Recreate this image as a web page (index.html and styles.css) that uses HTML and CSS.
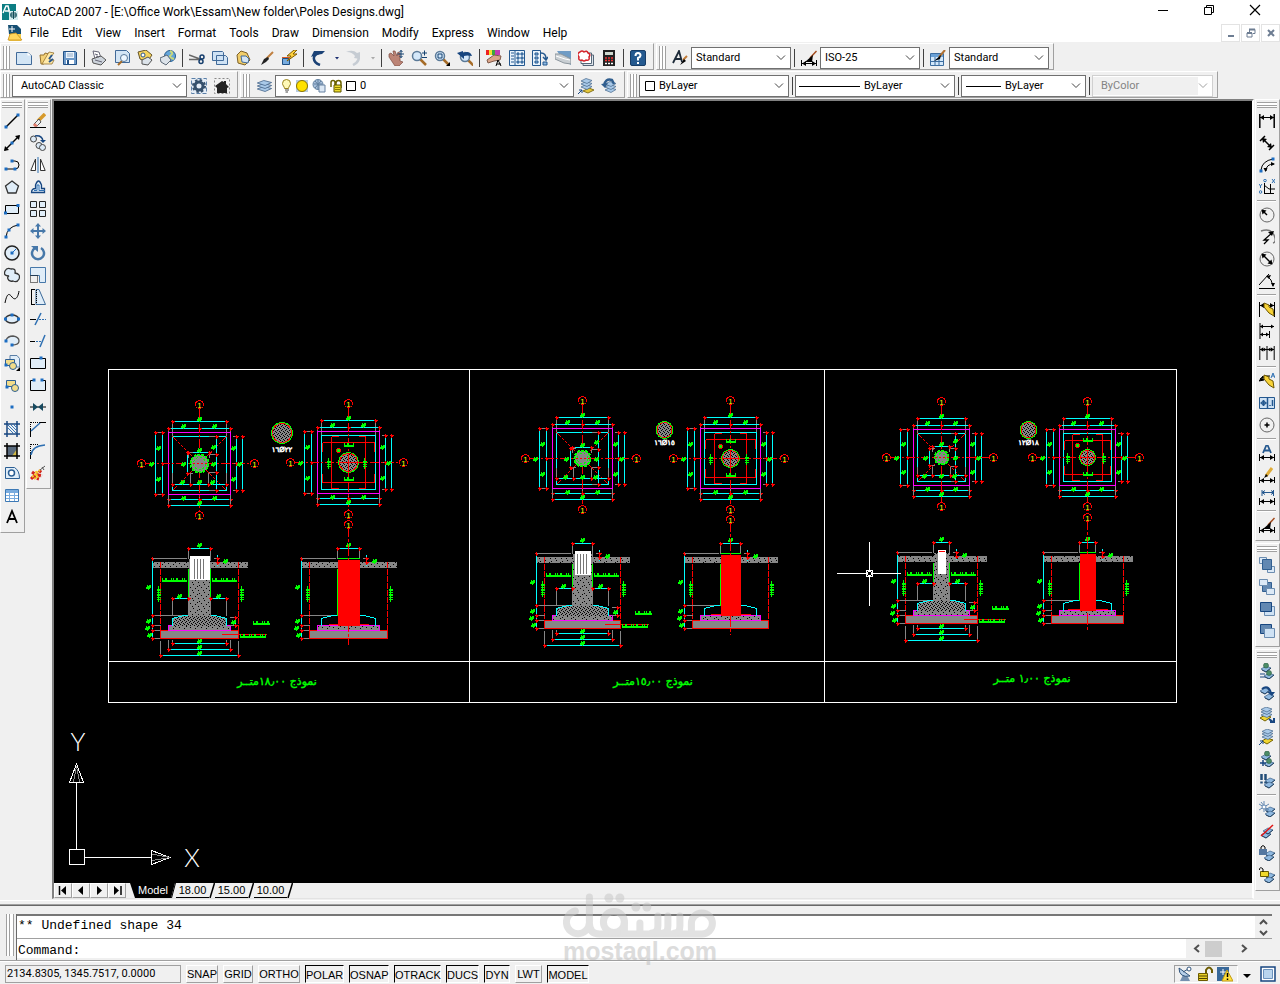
FILE: index.html
```html
<!DOCTYPE html>
<html lang="en">
<head>
<meta charset="utf-8">
<title>AutoCAD 2007 - [E:\Office Work\Essam\New folder\Poles Designs.dwg]</title>
<link rel="stylesheet" href="styles.css">
</head>
<body>
<header class="titlebar">
  <span class="app-icon" data-icon="app"></span>
  <h1 class="title">AutoCAD 2007 - [E:\Office Work\Essam\New folder\Poles Designs.dwg]</h1>
  <div class="win-controls">
    <button aria-label="Minimize"><svg width="12" height="12"><path d="M1 6.500h10" stroke="#000"/></svg></button>
    <button aria-label="Restore"><svg width="12" height="12"><path d="M1.500 3.500h7v7h-7zM3.500 3.500v-2h7v7h-2" fill="none" stroke="#000"/></svg></button>
    <button aria-label="Close"><svg width="12" height="12"><path d="M1 1l10 10M11 1L1 11" stroke="#000" stroke-width="1.200"/></svg></button>
  </div>
</header>
<nav class="menubar">
  <span class="doc-icon" data-icon="doc"></span>
  <button>File</button><button>Edit</button><button>View</button><button>Insert</button><button>Format</button><button>Tools</button><button>Draw</button><button>Dimension</button><button>Modify</button><button>Express</button><button>Window</button><button>Help</button>
  <div class="doc-controls">
    <button aria-label="Minimize drawing"><svg width="10" height="10"><path d="M2 8h6" stroke="#6d7d92" stroke-width="2"/></svg></button>
    <button aria-label="Restore drawing"><svg width="10" height="10"><path d="M1 5h5v4H1zM3.500 4V1.500H9v4H7" fill="none" stroke="#6d7d92"/><path d="M3 1.500h6M1 5h5" stroke="#6d7d92" stroke-width="2"/></svg></button>
    <button aria-label="Close drawing"><svg width="10" height="10"><path d="M2 2l6 6M8 2L2 8" stroke="#6d7d92" stroke-width="2"/></svg></button>
  </div>
</nav>
<div class="toolrow">
  <div class="toolbar" data-tools="new open save | plot preview publish globe | cut copy paste brush match | undo ^drop redo ^dropoff | pan zoomrt zoomwin zoomprev | props center palettes sheets markup calc | help"></div>
  <div class="toolbar">
    <span class="grip"></span>
    <button class="tool" aria-label="Text style" data-icon="textstyle"></button>
    <label class="combo w100"><select aria-label="Text style"><option>Standard</option></select></label>
    <span class="sep"></span>
    <button class="tool" aria-label="Dimension style" data-icon="dimstyle"></button>
    <label class="combo w100"><select aria-label="Dimension style"><option>ISO-25</option></select></label>
    <span class="sep"></span>
    <button class="tool" aria-label="Table style" data-icon="tablestyle"></button>
    <label class="combo w100"><select aria-label="Table style"><option>Standard</option></select></label>
  </div>
</div>
<div class="toolrow">
  <div class="toolbar">
    <span class="grip"></span>
    <label class="combo wide-text w175"><select aria-label="Workspace"><option>AutoCAD Classic</option></select></label>
    <button class="tool" aria-label="Workspace settings" data-icon="gear"></button>
    <button class="tool" aria-label="My workspace" data-icon="home"></button>
  </div>
  <div class="toolbar">
    <span class="grip"></span>
    <button class="tool" aria-label="Layer manager" data-icon="layers"></button>
    <label class="combo w300">
      <svg class="deco" width="80" height="18" aria-hidden="true"><path d="M10.500 2.500a4 4 0 0 1 4 4c0 2-2 3-2 5h-4c0-2-2-3-2-5a4 4 0 0 1 4-4z" fill="#fff9b8" stroke="#9a8420"/><path d="M9 13h4M9.500 15h2.500" stroke="#444"/><rect x="20" y="3" width="12" height="12" fill="#b8cce0"/><circle cx="26" cy="9" r="5.500" fill="#ffe100" stroke="#8b7400"/><circle cx="42" cy="7.500" r="5" fill="#a9c0dc" stroke="#61809f"/><path d="M38 7h8M42 3v9M39 4l6 7M45 4l-6 7" stroke="#61809f"/><path d="M43 8h6v7h-6z" fill="#dce8f5" stroke="#6681a0"/><path d="M55 10V5.500a2 2 0 0 1 4 0V9M60 9V6a2.500 2.500 0 0 1 5 0v5" fill="none" stroke="#6b6300" stroke-width="1.500"/><path d="M58 8h7v7h-7z" fill="#eddc2c" stroke="#5c5500"/><path d="M59 10.500h5M59 12.500h5" stroke="#8b8000"/><path d="M70.500 4.500h9v9h-9z" fill="#fff" stroke="#000"/></svg>
      <select aria-label="Layer"><option>0</option></select></label>
    <button class="tool" aria-label="Make object's layer current" data-icon="laycur"></button>
    <button class="tool" aria-label="Layer previous" data-icon="layprev"></button>
  </div>
  <div class="toolbar">
    <span class="grip"></span>
    <label class="combo w150"><svg class="deco" width="15" height="18" aria-hidden="true"><path d="M5.500 4.500h9v9h-9z" fill="#fff" stroke="#000"/></svg><select aria-label="Color"><option>ByLayer</option></select></label>
    <span class="sep"></span>
    <label class="combo w160"><svg class="deco" width="64" height="18" aria-hidden="true"><path d="M3 9.500h61" stroke="#000"/></svg><select aria-label="Linetype"><option>ByLayer</option></select></label>
    <span class="sep"></span>
    <label class="combo w125"><svg class="deco" width="39" height="18" aria-hidden="true"><path d="M4 9.500h35" stroke="#000"/></svg><select aria-label="Lineweight"><option>ByLayer</option></select></label>
    <span class="sep"></span>
    <label class="combo wide-text off w120"><select aria-label="Plot style" disabled><option>ByColor</option></select></label>
  </div>
</div>
<main class="workspace">
  <div class="toolbar vertical" data-tools="line xline pline polygon rect arc circle cloud spline ellipse earc insert block point hatch gradient region table mtext"></div>
  <div class="toolbar vertical" data-tools="erase copyobj mirror offset array move rotate scale stretch trim extend breakpt break join chamfer fillet explode"></div>
  <section class="viewport">
    <svg id="drawing" class="drawing" viewBox="54 101 1198 782" role="img" aria-label="Pole foundation drawings"></svg>
    <div class="tabs">
      <button class="nav" aria-label="First tab"><svg width="12" height="11"><path d="M2.500 1v9" stroke="#000" stroke-width="1.500"/><path d="M9 1v9L4 5.500z"/></svg></button>
      <button class="nav" aria-label="Previous tab"><svg width="12" height="11"><path d="M8 1v9L3 5.500z"/></svg></button>
      <button class="nav" aria-label="Next tab"><svg width="12" height="11"><path d="M4 1v9l5-4.500z"/></svg></button>
      <button class="nav" aria-label="Last tab"><svg width="12" height="11"><path d="M10 1v9" stroke="#000" stroke-width="1.500"/><path d="M3 1v9l5-4.500z"/></svg></button>
      <svg class="slant first" width="6" height="15"><path d="M0 0h6v15H5z"/></svg>
      <button class="tab current">Model</button>
      <svg class="slant" width="6" height="15"><path d="M0 0h5L1 15H0z"/><path d="M5.500 0L1.500 15" stroke="#000"/></svg>
      <button class="tab">18.00</button>
      <svg class="slant" width="6" height="15"><path d="M5.500 0L1 15" stroke="#000" stroke-width="1.500"/></svg>
      <button class="tab">15.00</button>
      <svg class="slant" width="6" height="15"><path d="M5.500 0L1 15" stroke="#000" stroke-width="1.500"/></svg>
      <button class="tab">10.00</button>
      <svg class="slant" width="6" height="15"><path d="M5.500 0L1 15" stroke="#000" stroke-width="1.500"/></svg>
    </div>
  </section>
  <div class="dock">
    <div class="toolbar vertical" data-tools="dlinear daligned darc dord | drad djog ddia dang | qdim dbase dcont | qleader tol cmark | dedit dtedit dupdate | dimstyle"></div>
    <div class="toolbar vertical" data-tools="front back above under"></div>
    <div class="toolbar vertical" data-tools="lmatch lprev2 lcur2 lcopy liso luniso | lfreeze loff llock lunlock"></div>
  </div>
</main>
<section class="command">
  <span class="grip"></span>
  <div class="console">
    <div class="history"><output>** Undefined shape 34</output>
      <div class="vscroll"><button aria-label="Scroll up"><svg width="9" height="6"><path d="M1 5l3.500-3.500L8 5" class="chev"/></svg></button><button aria-label="Scroll down"><svg width="9" height="6"><path d="M1 1l3.500 3.500L8 1" class="chev"/></svg></button></div>
    </div>
    <div class="prompt"><label for="cmd">Command:</label><input id="cmd" type="text">
      <div class="hscroll"><button aria-label="Scroll left"><svg width="7" height="9"><path d="M6 1L2 4.500 6 8" class="chev"/></svg></button><span class="thumb"></span><button aria-label="Scroll right"><svg width="7" height="9"><path d="M1 1l4 3.500L1 8" class="chev"/></svg></button></div>
    </div>
  </div>
  <div class="watermark">
    <svg width="154" height="45" viewBox="563 893 154 45" role="img" aria-label="mostaql">
      <g fill="none" stroke="#c6c6c6" stroke-width="7" stroke-linecap="round" stroke-linejoin="round">
        <path d="M589.500 897v26a11.500 11.500 0 1 1-14-12M589.500 923q0 11 10 11H702a10.500 10.500 0 1 0-10.500-10.500V934"/>
        <circle cx="614" cy="922" r="10.500"/><path d="M624.500 922v11M640 923v10M658 916v10q0 7-6 7M668 916v10q0 7-5 7M680 916v10q0 7-5 7"/>
      </g>
      <g fill="#c6c6c6"><circle cx="609" cy="898" r="4.500"/><circle cx="620" cy="898" r="4.500"/><circle cx="636" cy="907" r="4.500"/><circle cx="647" cy="907" r="4.500"/></g>
    </svg>
    <span>mostaql.com</span>
  </div>
</section>
<footer class="status">
  <output class="coords">2134.8305, 1345.7517, 0.0000</output>
  <button class="w32">SNAP</button><button class="w30">GRID</button><button class="w42">ORTHO</button><button class="w39 on">POLAR</button><button class="w40 on">OSNAP</button><button class="w47 on">OTRACK</button><button class="w33 on">DUCS</button><button class="w26 on">DYN</button><button class="w27">LWT</button><button class="w42 on">MODEL</button>
  <div class="tray"><span data-icon="dish"></span><span data-icon="lock"></span><span data-icon="warn"></span></div>
  <button class="bare" aria-label="Status bar menu"><svg width="8" height="4"><path d="M0 0h8L4 4z"/></svg></button>
  <button class="bare" aria-label="Clean screen" data-icon="clean"></button>
</footer>
<script src="app.js"></script>
</body>
</html>
```
FILE: styles.css
```css
* { box-sizing: border-box; }
html, body { height: 100%; }
body { margin: 0; display: flex; flex-direction: column; background: #f0f0f0; color: #000; font: 12px/16px Roboto, "Open Sans", sans-serif; overflow: hidden; }
button, select, input { font: inherit; color: inherit; margin: 0; padding: 0; border: 0; background: none; border-radius: 0; }
svg { display: block; flex: none; }
.chev { fill: none; stroke: #505050; stroke-width: 2; }

.titlebar { display: flex; align-items: center; flex: none; height: 24px; padding-left: 2px; background: #fff; }
.title { flex: 1; margin: 0 0 0 5px; font-size: 12px; font-weight: 400; }
.win-controls { display: flex; height: 20px; align-self: flex-start; margin-right: 2px; }
.win-controls button { width: 46px; display: grid; place-items: center; }
.menubar { display: flex; align-items: center; flex: none; height: 18px; padding-left: 7px; background: #fff; }
.doc-icon { width: 16px; }
.menubar > button { height: 18px; padding: 0 6px 0 7px; }
.doc-controls { display: flex; gap: 1px; margin-left: auto; }
.doc-controls button { width: 19px; height: 18px; display: grid; place-items: center; border: 1px solid #e3e3e3; background: #fff; }

.toolrow { display: flex; flex: none; gap: 2px; height: 27px; margin-top: 1px; }
.toolbar { display: flex; align-items: center; flex: none; height: 27px; padding: 2px 4px 0 2px; border: 1px solid #fff; border-right-color: #a0a0a0; border-bottom-color: #a0a0a0; }
.grip { width: 7px; height: 23px; margin-right: 2px; border: solid #a0a0a0; border-width: 0 1px; background: linear-gradient(90deg, #fff 2px, #a0a0a0 2px, #a0a0a0 3px, #fff 3px); flex: none; }
.tool { width: 23px; height: 22px; display: grid; place-items: center; flex: none; }
.tool.narrow { width: 13px; }
.sep { width: 6px; height: 18px; flex: none; background: linear-gradient(90deg, transparent 3px, #404040 3px, #404040 4px, transparent 4px); }
.combo { display: flex; align-items: center; flex: none; height: 22px; padding-right: 4px; border: 1px solid #707070; background: #fff; font-size: 11px; }
.combo select { flex: 1; min-width: 0; height: 20px; padding-left: 4px; appearance: none; }
.combo.wide-text select { padding-left: 8px; }
.combo.off { border-color: #d0d0d0; color: #838383; }
.combo.off select { background: #f0f0f0; opacity: 1; color: #838383; height: 18px; }
.combo.off .arrow { opacity: .5; }
.w100 { width: 100px; } .w120 { width: 121px; } .w125 { width: 125px; } .w150 { width: 150px; } .w160 { width: 160px; } .w175 { width: 175px; } .w300 { width: 299px; }

.workspace { display: flex; flex: 1; gap: 1px; min-height: 0; margin-top: 1px; align-items: flex-start; }
.toolbar.vertical { flex-direction: column; width: 25px; height: auto; padding: 2px 2px 4px 0; }
.vertical .grip { width: 20px; height: 6px; margin: 0 0 2px; border-width: 1px 0; background: linear-gradient(#fff 2px, #a0a0a0 2px, #a0a0a0 3px, #fff 3px); }
.vertical .sep { width: 19px; height: 6px; background: linear-gradient(transparent 2px, #a0a0a0 2px, #a0a0a0 3px, #fff 3px, #fff 4px, transparent 4px); }
.dock { display: flex; flex-direction: column; gap: 2px; }
.viewport { flex: 1; align-self: stretch; min-width: 0; display: flex; flex-direction: column; border: 2px solid #808080; border-right-color: #fff; border-bottom: 1px solid #e3e3e3; }
.drawing { flex: 1; min-height: 0; width: 100%; background: #000; }
.tabs { display: flex; height: 15px; flex: none; font: 11px/14px "Liberation Sans", Arial, sans-serif; }
.nav { width: 18px; height: 15px; display: grid; place-items: center; border: 1px solid #fff; border-right-color: #a0a0a0; border-bottom-color: #a0a0a0; }
.slant.first { margin-left: 4px; }
.tab { height: 15px; border-bottom: 1px solid #000; width: 33px; }
.tab.current { background: #000; color: #fff; width: 34px; }

.command { position: relative; flex: none; display: flex; height: 61px; margin-top: 1px; padding: 14px 8px 0 6px; border-bottom: 1px solid #a0a0a0; background: linear-gradient(#fff 1px, transparent 1px, transparent 4px, #a0a0a0 4px, #a0a0a0 5px, #696969 5px, #696969 6px, transparent 6px); font: 13px/16px "Liberation Mono", monospace; }
.command > .grip { height: 42px; width: 8px; }
.console { flex: 1; border-left: 1px solid #696969; }
.history { display: flex; justify-content: space-between; height: 25px; border-top: 2px solid #777; border-bottom: 1px solid #a0a0a0; background: #fff; padding-left: 1px; line-height: 20px; }
.vscroll { display: flex; flex-direction: column; width: 17px; background: #f0f0f0; }
.vscroll button { flex: 1; display: grid; place-items: center; }
.prompt { display: flex; align-items: stretch; height: 19px; margin-right: 17px; padding-left: 1px; background: #fff; line-height: 24px; }
.prompt input { flex: 1; min-width: 0; outline: 0; }
.hscroll { display: flex; align-items: center; width: 69px; background: #f0f0f0; }
.hscroll button { width: 20px; height: 18px; display: grid; place-items: center; }
.hscroll .thumb { width: 17px; height: 16px; margin: 0 12px 0 -1px; background: #cdcdcd; }
.watermark { position: absolute; left: 50%; top: -7px; transform: translateX(-50%); opacity: .5; pointer-events: none; color: #bababa; font: bold 25px/26px "Liberation Sans", Arial, sans-serif; text-align: center; }
.watermark svg { margin: 0 auto; }
.watermark span { display: block; }

.status { display: flex; align-items: center; flex: none; height: 23px; padding: 2px 4px 0 5px; border-top: 1px solid #fff; font: 11px/16px "Liberation Sans", Arial, sans-serif; gap: 5px; }
.coords { width: 176px; height: 18px; padding-left: 1px; border: 1px solid #a0a0a0; font-family: Roboto, sans-serif; }
.status button { height: 18px; border: 1px solid #fff; border-right-color: #a0a0a0; border-bottom-color: #a0a0a0; white-space: nowrap; flex: none; }
.status button.on { border-color: #000 #fff #fff #000; padding-top: 1px; }
.w26 { width: 26px; } .w27 { width: 27px; } .w30 { width: 30px; } .w32 { width: 32px; } .w33 { width: 33px; } .w39 { width: 39px; } .w40 { width: 40px; } .w42 { width: 42px; } .w47 { width: 47px; }
.tray { display: flex; gap: 4px; margin-left: auto; height: 18px; width: 64px; padding: 0 2px; border: 1px solid #a0a0a0; border-right-color: #fff; border-bottom-color: #fff; }
.status button.bare { border: 0; }
.status button.bare:nth-last-child(2) { padding-top: 4px; margin-right: 4px; }

.drawing text { font-family: "DejaVu Sans", sans-serif; text-anchor: middle; }
.drawing .caption { fill: #0f0; stroke: #0f0; stroke-width: .4px; font-size: 11px; direction: rtl; }
.drawing .axis { fill: #ff0; font: 8px "Liberation Sans", sans-serif; }
.drawing .bars { fill: #fff; stroke: #fff; stroke-width: .5px; font-size: 7px; }
.drawing .ucs { fill: #fff; font: 300 25px Lato, sans-serif; }
```
FILE: app.js
```js
const sheet = (x, y) => `<path d="M${x} ${y}l5-2.500 6 2-5 3z" fill="#a9c9e8" stroke="#44658a" stroke-width=".7"/>`;
const stack = (x, y) => sheet(x, y + 6) + sheet(x, y + 3) + sheet(x, y);
const bolt = '<path d="M5 2l5 2 0 2 4 2 1 7-5-3-5-6z" fill="#f8d338" stroke="#6b5500"/>';
const page = '<path d="M.5 2.500h11l4 3v9H.5z" fill="#d3e5f5" stroke="#416a99"/>';
const brush = '<path d="M15 2L8 9" stroke="#c08040" stroke-width="2"/><path d="M10 7l-4 2-3 6 5-3 3-3z" fill="#222"/>';
const dim = (y, c = '#000') => `<path d="M.5 ${y - 3}v7M15.500 ${y - 3}v7M1 ${y}.500h14" fill="none" stroke="${c}"/><path d="M1 ${y}.500l4-2.500v5zM15 ${y}.500l-4-2.500v5z" fill="${c}"/>`;
const dot = (x, y) => `<path d="M${x - 1.5} ${y - 1.5}h3v3h-3z" fill="#1c6dc2"/>`;
const black = (d, extra = '') => `<path d="${d}" fill="none" stroke="#000" ${extra}/>`;
const lens = (x, y) => `<path d="M${x + 3} ${y + 3}l6 6" stroke="#a66c28" stroke-width="2.500"/><circle cx="${x}" cy="${y}" r="4.500" fill="#d4e8fa" stroke="#5b7a98" stroke-width="1.500"/>`;
const mini = (x, y) => `<path d="M${x} ${y}l5-3 5 2-5 4z" fill="#8fb9e0" stroke="#3c628a" stroke-width=".7"/><path d="M${x + 1} ${y + 1}l4 2 5-4" fill="none" stroke="#24425f"/>`;
const man = (x, y) => `<circle cx="${x}" cy="${y}" r="2.500" fill="#4b8d68" stroke="#2a5a40" stroke-width=".6"/>`;

const icons = {
  app: '<path d="M0 0h14v16H0z" fill="#0c7d83"/><path d="M1 9L4 2h2l2 8M3 7h4" stroke="#fff" fill="none" stroke-width="1.500"/><path d="M7 7h9v9H7z" fill="#d6eef0"/><path d="M8 11h7M11.500 7v8M9 9h5v4H9z" stroke="#104c58" fill="none"/>',
  doc: '<path d="M2 3h10l2 3v10H2z" fill="#f5ce4c"/><path d="M1 0h9l4 4v5H2z" fill="#164f73"/><path d="M2 4h6M5 1v6" stroke="#fff"/><path d="M1 15l2-6 6-1 6 7z" fill="#ffd65c" stroke="#c9901c" stroke-width=".8"/>',
  new: page + '<path d="M11.500 2.500v3h4z" fill="#fff"/>',
  open: '<path d="M2 14L1 5l4 0 1-2 4 1-5 10z" fill="#f3d178" stroke="#967230"/><path d="M3 14l7-12 5 1-5 6 5 1-2 4z" fill="#ffe9a8" stroke="#967230" stroke-width=".8"/><path d="M13 5l-3 4M10 12l4-3" stroke="#2c588c" stroke-width="2"/>',
  save: '<path d="M1.500 1.500h12l1 1v12h-13z" fill="#6e9ac9" stroke="#235287"/><path d="M4 2h8v6H4z" fill="#eef5fc"/><path d="M4 10h8v4H4z" fill="#fff"/><path d="M5 4h6M5 6h6" stroke="#8fa9c5"/><path d="M6 10v4" stroke="#235287" stroke-width="2"/>',
  plot: '<path d="M2 1l6 1 2 6-6 1z" fill="#fff" stroke="#667"/><path d="M1 9l9-3 5 4-5 5-8-2z" fill="#cdd4dc" stroke="#555"/><path d="M4 10l7 2M4 4l3 1M5 6l3 1" stroke="#667"/>',
  preview: '<path d="M1.500 .5h11l3 3v9h-14z" fill="#d3e5f5" stroke="#416a99"/><path d="M8 11l-4 4" stroke="#a66c28" stroke-width="2"/><circle cx="10" cy="8" r="3.500" fill="#eef7ff" stroke="#57789a"/>',
  publish: '<path d="M1 2l8-2 6 5-5 7-7-3z" fill="#f4d25c" stroke="#65542a"/><circle cx="6" cy="5" r="2" fill="#fff" stroke="#2b5587"/><path d="M5 10l6-3 4 3-4 5-6-1z" fill="#dce3ea" stroke="#555"/>',
  globe: '<circle cx="10" cy="6" r="5.500" fill="#63a6dc" stroke="#285d8e"/><path d="M10 1q4 2 1 4t3 4" stroke="#c9d87b" stroke-width="2" fill="none"/><path d="M0 8l7-3 4 5-5 5-5-3z" fill="#dce3ea" stroke="#5d6a78"/>',
  cut: '<path d="M0 5l11 4M0 9.500h11" stroke="#666" stroke-width="1.500"/><circle cx="13" cy="7" r="2" fill="none" stroke="#163e6c" stroke-width="1.500"/><circle cx="12" cy="11.500" r="2" fill="none" stroke="#163e6c" stroke-width="1.500"/>',
  copy: '<path d="M.5 1.500h10l1 1v8H.5zM4.500 5.500h9l2 2v7h-11z" fill="#cfe2f4" stroke="#416a99"/>',
  paste: '<path d="M2 5l4-4 6 2 3 7-5 5-7-2z" fill="#f1cd69" stroke="#7b6029"/><path d="M6 6h5l3 3-1 4-6-1z" fill="#d3e5f5" stroke="#416a99"/>',
  brush,
  match: '<path d="M1.500 8.500h7v6h-7z" fill="#76abdf" stroke="#1c4e83"/><path d="M13 0L6 6h4l-4 5 10-7h-4l4-4z" fill="#ffd23c" stroke="#805b00"/><path d="M1 7.500h8" stroke="#d95a20"/>',
  undo: '<path d="M10 15C2 12 2 5 9 3" fill="none" stroke="#1b4276" stroke-width="2.500"/><path d="M1 7l3-6h11l-3 3-6 1z" fill="#1b4276"/>',
  redo: '<path d="M7 15C13 12 14 8 11 5" fill="none" stroke="#c6ccd3" stroke-width="2.500"/><path d="M0 2q7-3 11 1l3-1 0 7-6-1 1-2q-3-4-8-4z" fill="#c6ccd3"/>',
  drop: '<path d="M6 7h4L8 9.500z" fill="#1b2e70"/>', dropoff: '<path d="M6 7h4L8 9.500z" fill="#aaa"/>',
  pan: '<path d="M1 4l2-1 3 3-1-5 2 0 2 5 1-4 2 1v8l3 1-4 4H7L1 7z" fill="#bc8476" stroke="#7c4a40" stroke-width=".7"/><path d="M13 0v8M9.500 4H16M11.500 2L13 .5 14.500 2M11.500 6L13 7.500 14.500 6" stroke="#154270" fill="none"/>',
  zoomrt: lens(6, 6) + '<path d="M11 3h5M13.500 .5v5M11 7.500h5" stroke="#154270"/>',
  zoomwin: lens(6, 6) + '<path d="M4 4h4v4H4z" fill="none" stroke="#154270"/><path d="M16 12v4h-4z"/>',
  zoomprev: lens(8, 7) + '<path d="M0 3l6-2v2q7-3 9 3-5-1-8 0v3z" fill="#174680"/>',
  props: '<path d="M0 0h3v5H0z" fill="#e22"/><path d="M3 0h3v5H3z" fill="#f4e130"/><path d="M6 0h3v5H6z" fill="#3aa93f"/><path d="M9 0h5v5H9z" fill="#c33bb3"/><path d="M1 10l7-5 7 1-1 4-6 1-6 2z" fill="#dba58a" stroke="#7e5a4a"/><path d="M10 16l2-6 3 6M11 14h4" stroke="#000" fill="none"/>',
  center: '<path d="M.5 .5h15v15H.5z" fill="#e9f3fc" stroke="#24588f"/><path d="M6 1v14" stroke="#24588f"/><path d="M2 3h3M2 6h3M2 9h3M2 12h3M8 3h2v2H8zM12 3h2v2h-2zM8 7h2v2H8zM12 7h2v2h-2zM8 11h2v2H8zM12 11h2v2h-2z" stroke="#24588f" fill="#8fb9e0"/>',
  palettes: '<path d="M.5 .5h8v15h-8z" fill="#e9f3fc" stroke="#24588f"/><path d="M3 3h3v2H3zM3 7h3v2H3zM3 11h3v2H3z" fill="#8fb9e0" stroke="#24588f"/><path d="M9 3q5 0 5 6M11 7l3 3 2-3" fill="none" stroke="#24588f" stroke-width="1.500"/><path d="M11 12h4v3h-4z" fill="#8fb9e0" stroke="#24588f"/>',
  sheets: '<path d="M2 1h14v14L8 10z" fill="#6f9cc5"/><path d="M0 4l6 0 10 5v5l-7-1-9-4z" fill="#c9cfd3" stroke="#8c969d"/><path d="M1 6l9 3 5 1" stroke="#fff" fill="none"/>',
  markup: '<path d="M5 5h10.500v10.500H5z" fill="#dfe5ec" stroke="#567"/><path d="M3 3h10.500v10.500H3z" fill="#fff" stroke="#567"/><path d="M2 2q2-2 4 0 3-2 4 1 3 1 1 4 1 4-3 3-2 2-4 0-4 1-3-3-3-3 1-5z" fill="#fff" stroke="#d4232a" stroke-width="1.500"/>',
  calc: '<path d="M2 0h12v16H2z" fill="#222"/><path d="M4 2h8v3H4z" fill="#cfd8cf"/><path d="M4 8h8M4 10.500h8" stroke="#e33" stroke-width="1.500" stroke-dasharray="2 1"/><path d="M4 13.500h8" stroke="#fff" stroke-width="1.500" stroke-dasharray="2 1"/>',
  help: '<rect x=".5" y=".5" width="15" height="15" rx="1.500" fill="#24598f" stroke="#173c66"/><path d="M5.500 6q0-3 2.500-3t2.500 2.500Q10.500 7 8 8v2.500M8 12v2" stroke="#fff" stroke-width="2" fill="none"/>',
  textstyle: '<path d="M1 13L7 1l3 11M3 9h6" stroke="#1d2a38" fill="none" stroke-width="1.800"/><path d="M15 6l-4 4" stroke="#c07a35" stroke-width="2"/><path d="M12 9l-4 6 6-4z"/>',
  dimstyle: dim(13) + '<path d="M15.500 1L9 8" stroke="#a34a1c" stroke-width="1.500"/><path d="M12 5L4 12h7z"/>',
  tablestyle: '<path d="M.5 3.500h13v12H.5z" fill="#d4e8fa" stroke="#3d6d9f"/><path d="M1 4h12v3H1z" fill="#69a0d6"/><path d="M1 11.500h12M5 7v8M9 7v8" stroke="#3d6d9f"/><path d="M15 0L9 7" stroke="#b07030" stroke-width="2"/><path d="M11 5L4 11l6-2z"/>',
  gear: '<path d="M.5 .5h15v15H.5z" fill="#e4edf7" stroke="#5b80a8" stroke-dasharray="4 2"/><circle cx="8" cy="8" r="4" fill="none" stroke="#35506c" stroke-width="3"/><circle cx="8" cy="8" r="6" fill="none" stroke="#35506c" stroke-width="2" stroke-dasharray="2.500 2.200"/>',
  home: '<path d="M.5 .5h15v15H.5z" fill="none" stroke="#888" stroke-dasharray="2 2"/><path d="M1 8l7-5 2 1V3h2v3l3 3-2 1v5H3v-5z" fill="#222"/>',
  layers: '<g transform="scale(1.300 1)">' + sheet(1, 11) + sheet(1, 8) + sheet(1, 5) + '</g>',
  laycur: '<path d="M5 13l6-3 5 2-6 3z" fill="#e4c63a" stroke="#86751e"/>' + sheet(3, 9) + sheet(3, 6) + sheet(3, 3) + '<path d="M0 16l4-4M1 12h3v3" stroke="#174680" fill="none"/>',
  layprev: stack(4, 6) + '<path d="M3 8Q4 0 11 2l2 4" fill="none" stroke="#315f8f" stroke-width="2.500"/><path d="M0 6l7-1-3 5z" fill="#315f8f"/>',
  line: black('M2 14L14 2', 'stroke-width="1.500"') + dot(2, 14) + dot(14, 2),
  xline: black('M1 15L15 1', 'stroke-width="1.500"') + '<path d="M0 16l1-5 4 4zM16 0l-5 1 4 4z"/>' + dot(8, 8),
  pline: black('M1 12h10M7 4h4q4 0 4 4t-4 4') + dot(2, 12) + dot(8, 4) + dot(11, 12),
  polygon: '<path d="M8 2l6.500 5-2.500 7H4L1.500 7z" fill="#e0edf8" stroke="#333" stroke-width="1.300"/>',
  rect: '<path d="M1.500 4.500h13v8h-13z" fill="#e0edf8" stroke="#000"/>' + dot(1.5, 12) + dot(14, 4.5),
  arc: black('M2 14Q3 4 14 2') + dot(2, 14) + dot(5, 7) + dot(14, 2),
  circle: '<circle cx="8" cy="8" r="7" fill="#e0edf8" stroke="#222" stroke-width="1.500"/><path d="M8 8l4-4" stroke="#1c6dc2"/>' + dot(8, 8),
  cloud: '<path d="M5 9Q-1 9 1 4q2-4 6-2 5-1 4 4 6 1 4 6-2 4-6 2-4 1-5-2-1-2 1-3z" fill="#e0edf8" stroke="#333" stroke-width="1.300"/>',
  spline: black('M1 14C3 4 5 4 8 8s6 1 7-6'),
  ellipse: '<ellipse cx="8" cy="8" rx="6.500" ry="4" fill="#e0edf8" stroke="#333" stroke-width="1.500"/>' + dot(1.5, 8) + dot(14.5, 8) + dot(8, 4),
  earc: '<path d="M2 7q2-4 7-4 6 1 6 5t-7 4" fill="#e0edf8" stroke="#555" stroke-width="1.300"/>' + dot(2, 8) + dot(8, 12),
  insert: '<path d="M6 .5h7l2.500 3V12H6z" fill="#e0edf8" stroke="#5b7fa6"/><path d="M1.500 4.500h9v6h-9z" fill="#f2dc8a" stroke="#2c5f94"/><circle cx="9" cy="11" r="3.500" fill="#f2dc8a" stroke="#2c5f94"/><path d="M16 12v4h-4z"/>' + dot(2, 10),
  block: '<path d="M2.500 3.500h9v6h-9z" fill="#f2dc8a" stroke="#2c5f94"/><circle cx="11" cy="11" r="3.500" fill="#f2dc8a" stroke="#2c5f94"/>' + dot(3, 10),
  point: dot(8, 8),
  hatch: '<path d="M3 0v16M13 0v16M0 3h16M0 13h16" stroke="#174680" stroke-width="1.500"/><path d="M4 7l5 5M4 4l8 8M7 4l5 5M10 4l3 3" stroke="#3779bb"/>',
  gradient: '<path d="M3 3h10v10H3z" fill="#596a7d"/><path d="M8 13l5-7v7z" fill="#d3ba45"/><path d="M3 0v16M13 0v16M0 3h16M0 13h16" stroke="#000" stroke-width="1.500"/>',
  region: '<path d="M1.500 2.500h9q5 3 5 11h-14z" fill="#e0edf8" stroke="#2c5f94"/><circle cx="7.500" cy="8" r="3" fill="#fff" stroke="#2c5f94" stroke-width="1.500"/>',
  table: '<path d="M1.500 2.500h13v12h-13z" fill="#fff" stroke="#3d79b5"/><path d="M2 3h12v3H2z" fill="#79abde"/><path d="M2 8.500h12M2 11.500h12M5.500 6v8M10.500 6v8" stroke="#79abde"/>',
  mtext: black('M3 14L8 2l5 12M5 10h6', 'stroke-width="1.800"'),
  erase: '<path d="M0 14.500h16" stroke="#000"/><path d="M15 1L8 8" stroke="#d79a2b" stroke-width="3.500"/><path d="M9 6l2 3-4 4q-3 1-3-2z" fill="#eee" stroke="#555"/><path d="M5 10l3 3-3 1-2-2z" fill="#e27c6b"/>',
  copyobj: '<circle cx="3.500" cy="4" r="3" fill="#dceaf7" stroke="#444"/><circle cx="9" cy="10.500" r="3" fill="#dceaf7" stroke="#444"/><circle cx="12.500" cy="12.500" r="3" fill="#dceaf7" stroke="#444"/><path d="M5 1q7-1 8 5" stroke="#174680" stroke-width="1.500" fill="none"/><path d="M10 5h6l-3 3z" fill="#174680"/>',
  mirror: '<path d="M5.500 2v11.500H.8zM10.500 2v11.500h4.700z" fill="#fff" stroke="#333"/><path d="M8 0v16" stroke="#2f70b2"/>',
  offset: '<path d="M1.500 13.500h13v-4h-3V6q-3-8-6 0v3.500q-4 0-4 4z" fill="#e0edf8" stroke="#174680" stroke-width="1.300"/><path d="M4 11.500h3V6h2v5.500h6" stroke="#2f70b2" fill="none"/>',
  array: '<path d="M.5 .5h6v6h-6zM9.500 .5h6v6h-6zM.5 9.500h6v6h-6zM9.500 9.500h6v6h-6z" fill="#e0edf8" stroke="#222"/>',
  move: '<path d="M8 0l3 3.500H9v3.500h3.500V5L16 8l-3.500 3V9H9v3.500h2L8 16l-3-3.500h2V9H3.500v2L0 8l3.500-3v2H7V3.500H5z" fill="#4778a9"/>',
  rotate: '<path d="M5 3a6 6 0 1 0 6 0" stroke="#4778a9" stroke-width="2.500" fill="none"/><path d="M1 1h7v6z" fill="#4778a9"/>',
  scale: '<path d="M.5 .5h15v15h-6v-7h-9z" fill="#e0edf8" stroke="#4778a9"/><path d="M.5 8.500h7v7h-7z" fill="none" stroke="#000" stroke-dasharray="1 1"/>',
  stretch: '<path d="M6 .5h3l6.500 15H6z" fill="#e0edf8" stroke="#3b6a99"/><path d="M1 .5h4M1 15.500h4M1.500 0v16" stroke="#000"/><path d="M6.500 1v14" stroke="#000" stroke-dasharray="1 1"/>',
  trim: '<path d="M0 8.500h6" stroke="#000"/><path d="M5 14l6-12" stroke="#2f70b2" stroke-width="1.500"/><path d="M9 8.500h7" stroke="#2f70b2" stroke-dasharray="2 1"/>',
  extend: '<path d="M0 8.500h5" stroke="#000"/><path d="M6 8.500h5" stroke="#2f70b2" stroke-dasharray="2 1"/><path d="M10 14l5-12" stroke="#2f70b2" stroke-width="1.500"/>',
  breakpt: '<path d="M.5 3.500h15v10H.5z" fill="#e0edf8" stroke="#000"/>' + dot(11, 3),
  break: '<path d="M.5 3.500h15v10H.5z" fill="#e0edf8"/><path d="M3 3.500H.5v10h15v-10H13" fill="none" stroke="#000"/>' + dot(4, 3) + dot(12, 3),
  join: '<path d="M0 8h16" stroke="#000"/><path d="M3 4l5 4-5 4zM13 4L8 8l5 4z" fill="#174a60"/>',
  chamfer: '<path d="M.5 7v9" stroke="#000"/><path d="M.5 1v6M1 1.500h8" stroke="#000" stroke-dasharray="1 1"/><path d="M9 1.500h7" stroke="#000"/><path d="M1 10l9-8" stroke="#2f70b2" stroke-width="1.500"/>',
  fillet: '<path d="M.5 9v7" stroke="#000"/><path d="M.5 1v8M1 1.500h8" stroke="#000" stroke-dasharray="1 1"/><path d="M1 12Q2 3 15 2" stroke="#2f70b2" stroke-width="1.500" fill="none"/>',
  explode: '<path d="M1 14l4-4M2 7l4 3M7 11l4-6M8 10l4 1M3 12l6 2" stroke="#d2231c" stroke-width="3" stroke-dasharray="3 1"/><path d="M2 12l8-7M4 14l5-3M6 6l1 7" stroke="#f6c927" stroke-width="2" stroke-dasharray="2 1"/><path d="M10 5l5-4M12 2l2 3" stroke="#555"/>',
  dlinear: '<path d="M.8 1v14M15.200 1v14" stroke="#000" stroke-width="1.500"/>' + black('M1 4.500h14') + '<path d="M1 4.500l4-2.500v5zM15 4.500l-4-2.500v5z"/>',
  daligned: black('M1 6l5-5M10 15l5-5M4 4l8 8', 'stroke-width="1.500"') + '<path d="M3 3l5 1-4 4zM13 13l-5-1 4-4z"/>',
  darc: black('M2 13Q3 4 14 2') + black('M7 14q0-7 8-7') + '<path d="M16 7l-4-2v4zM6.500 15l-2-4h4z"/>' + dot(2, 14) + dot(14, 2),
  dord: black('M5 14.500h10M5.500 4v11M5 6l5 4h6M11.500 5v10') + '<path d="M0 5l1.500 2L3 5M1.500 7v2M13 0l3 4M16 0l-3 4" stroke="#2f70b2" fill="none"/><circle cx="1.500" cy="13" r="1.300" fill="none" stroke="#2f70b2"/><circle cx="6" cy="1.500" r="1.300" fill="none" stroke="#2f70b2"/>',
  drad: '<circle cx="8" cy="8" r="7" fill="none" stroke="#666"/>' + black('M8 8L4 4', 'stroke-width="1.500"') + '<path d="M2.500 2.500l5 1-4 4z"/>',
  djog: '<path d="M2 2q10-3 13 4t-1 8" stroke="#777" fill="none" stroke-width="1.500"/>' + black('M5 15l4-4H5l8-7', 'stroke-width="1.300"') + '<path d="M15 2l-6 1 4 4z"/>',
  ddia: '<circle cx="8" cy="8" r="7" fill="none" stroke="#666"/>' + black('M4 4l8 8', 'stroke-width="1.500"') + '<path d="M2.500 2.500l5 1-4 4zM13.500 13.500l-5-1 4-4z"/>',
  dang: black('M0 15.500h16M0 12L10 1M8 3q5 3 6 10') + '<path d="M7 3l5-1-2 4zM14 14l-2-4h4z"/>',
  qdim: dim(4) + '<path d="M.5 1v15M15.500 1v15" stroke="#000"/>' + bolt,
  dbase: black('M1 0v16M1 3.500h14M1 11.500h9M10.500 8v7') + '<path d="M1 3.500l3-2v4zM15 3.500l-3-2v4zM1 11.500l3-2v4zM10 11.500l-3-2v4z"/>',
  dcont: black('M.8 1v14M8 1v14M15.200 1v14M1 4.500h14') + '<path d="M1 4.500l3-2v4zM7.500 4.500l-3-2v4zM8.500 4.500l3-2v4zM15 4.500l-3-2v4z"/>',
  qleader: '<path d="M1 6l5-3h5M4 3L0 8l5-1" stroke="#000" fill="#000"/>' + bolt + '<path d="M12 5l2-5 2 5M13 3h2" stroke="#2f70b2" fill="none"/>',
  tol: '<path d="M.5 2.500h15v11H.5z" fill="#cfe2f4" stroke="#24588f"/><path d="M8.500 3v10M1.500 8h6M4.500 5v6M11 10v1M13.500 5v6" stroke="#24588f" stroke-width="1.500"/><circle cx="4.500" cy="8" r="2" fill="none" stroke="#24588f"/>',
  cmark: '<circle cx="8" cy="8" r="7" fill="none" stroke="#666"/>' + black('M8 5.500v5M5.500 8h5', 'stroke-width="1.500"'),
  dedit: dim(12) + '<path d="M4 8l3.500-8h1L12 8M5 5.500h6" stroke="#24588f" stroke-width="1.800" fill="none"/>',
  dtedit: dim(13) + '<path d="M13 1L7 9" stroke="#e0ac38" stroke-width="3"/><path d="M7 7l-2 4 4-2z"/>',
  dupdate: dim(12) + '<path d="M3 1v6M14.500 1v6M3 3.500h12M6 1.500l-3 2 3 2M12 1.500l3 2-3 2" stroke="#24588f" fill="none"/>',
  front: '<path d="M.5 .5h7v6h-7zM8.500 9.500h7v6h-7z" fill="#dce9f6" stroke="#6c8db0"/><path d="M3.500 2.500h9v10h-9z" fill="#6288b2" stroke="#315f91"/>',
  back: '<path d="M3.500 3.500h9v9h-9z" fill="#6288b2" stroke="#315f91"/><path d="M.5 .5h8v6h-8zM7.500 9.500h8v6h-8z" fill="#dce9f6" stroke="#6c8db0"/>',
  above: '<path d="M5.500 5.500h10v9h-10z" fill="#cfe2f4" stroke="#6c8db0"/><path d="M1.500 1.500h11v9h-11z" fill="#6288b2" stroke="#174680"/>',
  under: '<path d="M1.500 1.500h11v9h-11z" fill="#6288b2" stroke="#174680"/><path d="M5.500 5.500h10v9h-10z" fill="#cfe2f4" stroke="#6c8db0"/>',
  lmatch: mini(2, 6) + man(7, 2.5) + mini(5, 13) + man(10, 10) + '<path d="M1 11h5M1 14h5" stroke="#174680"/>',
  lprev2: mini(1, 6) + mini(5, 12) + '<path d="M3 4q6-5 9 4" fill="none" stroke="#174680" stroke-width="2"/><path d="M8 7h8l-3 4z" fill="#174680"/>',
  lcur2: '<path d="M1 11l5-3 6 2-6 4z" fill="#f1d631" stroke="#756300"/>' + sheet(2, 8) + sheet(2, 5) + sheet(2, 2.5) + '<path d="M10 12l4 3M15 11v4h-4" stroke="#174680" fill="none" stroke-width="2"/>',
  lcopy: '<path d="M3 12l5-3 6 2-6 4z" fill="#f1d631" stroke="#756300"/>' + sheet(3, 8) + sheet(3, 5) + sheet(3, 2.5) + '<path d="M0 16l4-4M1 12h3v3" stroke="#174680" fill="none"/>',
  liso: mini(2, 6) + man(8, 2.5) + mini(5, 13) + man(10, 10) + '<path d="M1 12h6M4 9v6" stroke="#174680" stroke-width="1.500"/>',
  luniso: mini(6, 8) + mini(5, 12) + '<path d="M2.500 1v6M6.500 1v6M2.500 8.500v2M6.500 8.500v2" stroke="#234e78" stroke-width="2.500"/>',
  lfreeze: mini(6, 9) + mini(6, 13) + '<path d="M5 0v11M0 3l10 6M10 3L0 9M2 1l7 9" stroke="#6589b2"/><circle cx="5" cy="6" r="2" fill="#fff" stroke="#6589b2"/>',
  loff: mini(2, 12) + mini(4, 8) + '<path d="M2 13L14 2" stroke="#e01414" stroke-width="1.500"/>',
  llock: mini(6, 9) + mini(5, 13) + '<path d="M0 4h8v6H0z" fill="#5477a0"/>' + black('M2 4V2q2-3 4 0v2'),
  lunlock: mini(6, 9) + mini(5, 13) + '<path d="M1.500 4.500h8v5h-8z" fill="#efd82b" stroke="#685c00"/>' + black('M.5 3q0-4 3.500-1v3'),
  dish: '<path d="M6 9l-3 6h10l-3-6z" fill="#7590b0"/><path d="M2 2q0 10 11 8z" fill="#b9d1ea" stroke="#31547c"/><path d="M6 6l7-4" stroke="#31547c"/><circle cx="12" cy="3" r="2" fill="#fff" stroke="#31547c"/>',
  lock: '<path d="M1.500 7.500h9v7h-9z" fill="#e9cf25" stroke="#6c5b00"/><path d="M2 10h8M2 12.500h8" stroke="#4e4300"/><path d="M9 8V4q3-5 6 0v3" fill="none" stroke="#6c5b00" stroke-width="2"/>',
  warn: '<path d="M0 1h12v14H0z" fill="#386899"/><path d="M3 6h6M6 3v6" stroke="#fff"/><path d="M10 4l6 11H5z" fill="#ffdf3d" stroke="#c19b12"/><path d="M10.500 7v4M10.500 12.500v1.500" stroke="#000" stroke-width="1.500"/>',
  clean: '<path d="M1 1h14v14H1z" fill="#fff" stroke="#174680" stroke-width="1.500"/><path d="M3.500 3.500h9v9h-9z" fill="#b9d5ee" stroke="#6c93bd"/>'
};

const iconSvg = name => `<svg width="16" height="16" viewBox="0 0 16 16" aria-hidden="true">${icons[name]}</svg>`;
document.querySelectorAll('[data-tools]').forEach(bar => {
  bar.innerHTML = '<span class="grip"></span>' + bar.dataset.tools.split(' ').map(t => {
    if (t === '|') return '<span class="sep"></span>';
    const narrow = t[0] === '^';
    const name = narrow ? t.slice(1) : t;
    return `<button class="tool${narrow ? ' narrow' : ''}" aria-label="${name}">${iconSvg(name)}</button>`;
  }).join('');
});
document.querySelectorAll('[data-icon]').forEach(el => { el.innerHTML = iconSvg(el.dataset.icon); });
document.querySelectorAll('.combo').forEach(el => {
  el.insertAdjacentHTML('beforeend', '<svg class="arrow" width="10" height="6"><path d="M1 .5l4 4 4-4" fill="none" stroke="#444"/></svg>');
});

/* Drawing primitives */
const R = '#f00', C = '#0ff', G = '#0f0', M = '#f0f', Y = '#868686';
const ln = (x1, y1, x2, y2, c, dash = '') => `<path d="M${x1} ${y1}L${x2} ${y2}" stroke="${c}" ${dash && `stroke-dasharray="${dash}"`}/>`;
const box = (x1, y1, x2, y2, c, fill = 'none') => `<rect x="${x1}" y="${y1}" width="${x2 - x1}" height="${y2 - y1}" stroke="${c}" fill="${fill}"/>`;
const tick = (x, y) => `<path d="M${x - 2} ${y}h4M${x} ${y - 2}v4" stroke="${R}"/><path d="M${x - 1} ${y - 1}h2v2h-2z" fill="${R}"/>`;
const blob = (x, y) => {
  const a = Math.round(x), b = Math.round(y);
  return `<path d="M${a - 2} ${b - 2}h1v1h1v-1h2v3h-1v1h-1v1h-1v-1h-2v-2h1z" fill="${G}"/>`;
};
const dimH = (pts, y, to) => pts.map(x => ln(x, y - 2, x, to, Y)).join('') + ln(pts[0], y, pts[pts.length - 1], y, C) + pts.map(x => tick(x, y)).join('');
const dimV = (pts, x, to) => pts.map(y => ln(x, y, to, y, Y)).join('') + ln(x, pts[0], x, pts[pts.length - 1], C) + pts.map(y => tick(x, y)).join('');
const bubble = (x, y) => `<circle cx="${x}" cy="${y}" r="4" fill="#000" stroke="${R}"/><text class="axis" x="${x}" y="${y + 3}">1</text>`;
const note = (x, y, w) => `<path d="M${x} ${y}h${w}" stroke="${G}" stroke-width="2"/><path d="M${x} ${y - 1}h${w}" stroke="${G}" stroke-width="4" stroke-dasharray="1 2 2 4 1 1"/>`;
const noteV = (x, y, h) => `<path d="M${x} ${y}v${h}" stroke="${G}" stroke-width="1"/><path d="M${x} ${y + 3}v${h - 5}" stroke="${G}" stroke-width="4" stroke-dasharray="2 1 1 1"/>`;

function planFrame(x, y, h) {
  const q = h - 4;
  return dimH([x - q, x + q], y - h - 11, y - q) + dimH([x - h, x, x + h], y - h - 4, y - h)
    + dimH([x - h, x, x + h], y + h + 5, y + h) + dimH([x - h, x + h], y + h + 11, y + h)
    + dimV([y - h, y + h], x - h - 13, x - h - 4) + dimV([y - h, y, y + h], x - h - 6, x - h - 4)
    + dimV([y - q, y, y + q], x + h + 6, x + q + 6) + dimV([y - q, y + q], x + h + 12, x + h + 14)
    + box(x - h, y - h, x + h, y + h, M) + box(x - q, y - q, x + q, y + q, C)
    + ln(x - h - 23, y, x + h + 20, y, R, '9 2 2 2') + ln(x, y - h - 24, x, y + h + 17, R, '9 2 2 2')
    + bubble(x, y - h - 28) + bubble(x, y + h + 21) + bubble(x - h - 27, y) + bubble(x + h + 24, y)
    + [[0, -h - 14], [-h / 2, -h - 7], [h / 2, -h - 7], [-h / 2, h + 3], [h / 2, h + 3], [0, h + 8], [-h - 17, 0], [-h - 10, -h / 2], [-h - 10, h / 2], [h + 3, -h / 2], [h + 3, h / 2], [h + 9, 0]].map(p => blob(x + p[0], y + p[1])).join('');
}
function pedestalPlan(x, y, h, r) {
  const q = h - 4;
  return planFrame(x, y, h) + [[-1, -1], [1, -1], [-1, 1], [1, 1]].map(p => ln(x + p[0] * q, y + p[1] * q, x + p[0] * 7, y + p[1] * 7, R, '3 1')).join('')
    + dimH([x - q, x - 9, x + 9, x + q], y + q - 6, y + 9) + dimV([y - q, y - 9, y + 9, y + q], x + q - 10, x + 9)
    + dimH([x - r - 1, x + r], y - 11, y - 6) + dimV([y - r - 1, y + r], x - 12, x - 7)
    + `<circle cx="${x}" cy="${y}" r="${r - 1}" fill="${Y}" stroke="${G}" stroke-width="2" stroke-dasharray="3 1"/><circle cx="${x}" cy="${y}" r="${r - 4}" fill="none" stroke="${G}" stroke-dasharray="2 2"/>` + ln(x - 7, y, x + 7, y, R, '2 2')
    + [[0, -14], [-16, 0], [14, 0], [14, -17], [0, 18], [-17, 18], [13, 18]].map(p => blob(x + p[0], y + p[1])).join('');
}
function rebarPlan(x, y, h, r) {
  const a = h - 5, b = h - 11, c = Math.round(h / 2) + 1;
  return planFrame(x, y, h) + ln(x - a, y - b, x + a, y - b, R) + ln(x - a, y + b, x + a, y + b, R)
    + ln(x - c, y - a, x - c, y + a, R) + ln(x + c, y - a, x + c, y + a, R)
    + `<path d="M${x - a} ${y - b}v9M${x + a} ${y - b}v9M${x - a} ${y + b}v-9M${x + a} ${y + b}v-9M${x - c} ${y - a}h7M${x + c} ${y - a}h-7M${x - c} ${y + a}h7M${x + c} ${y + a}h-7" stroke="${R}"/>`
    + section(x, y, r) + ln(x - r, y, x + r, y, R) + ln(x, y - r, x, y + r, R)
    + note(x - 5, y - 17, 10) + note(x - 5, y + 17, 10) + noteV(x - 20, y - 5, 11) + noteV(x + 16, y - 5, 11)
    + `<circle cx="${x - 10}" cy="${y - 12}" r="2" fill="${G}" stroke="${R}"/>`;
}
const section = (x, y, r) => `<circle cx="${x}" cy="${y}" r="${r}" fill="url(#dense)" stroke="${G}"/><circle cx="${x}" cy="${y}" r="${r - 1}" fill="none" stroke="${R}" stroke-dasharray="4 1"/>`;

function elevation(x, m, rebar) {
  const { h, T, F, w } = m, q = h - 4, e = h + 8;
  const band = T + 3.5;
  let s = `<rect x="${x - e - 9}" y="${band}" width="${2 * e + 18}" height="6" fill="url(#sparse)"/>`
    + ln(x - e, band, x - e, F + 5, R, '6 1') + ln(x + e, band, x + e, F + 5, R, '6 1')
    + dimV([T, F - 10, F, F + 5, F + 13], x - e - 8, x - e)
    + ln(x - e - 8, T, x - w - 2, T, Y) + ln(x - e, F - 10, x - w, F - 10, Y)
    + dimH([x - w, x + w], T - 10, T)
    + ln(x + w + 3, T, x + w + 9, T, Y) + ln(x + w + 7, T - 4, x + w + 7, T + 7, C) + tick(x + w + 7, T) + tick(x + w + 7, T + 4)
    + noteV(x - e - 2, T + 27, 16) + noteV(x + e + 3, T + 27, 16) + blob(x + w + 15, T + 2) + blob(x, T - 14)
    + blob(x - e - 12, T + 28) + blob(x - e - 12, F - 5) + blob(x - e - 13, F + 2) + blob(x - e - 11, F + 9)
    + box(x - e, F + 5, x + e, F + 13, R, Y)
    + box(x - h, F, x + h, F + 5, M, 'url(#sparse)')
    + `<path d="M${x - q} ${F}V${F - 7}L${x - w - 5} ${F - 10}H${x + w + 5}L${x + q} ${F - 7}V${F}" fill="${rebar ? 'none' : 'url(#dense)'}" stroke="${C}"/>`;
  if (rebar) {
    s += `<rect x="${x - w}" y="${T + 1}" width="${2 * w}" height="${F - T - 1}" fill="${R}"/>`
      + ln(x - w, T, x + w, T, G) + ln(x - w, T + 10, x - w, F - 10, G) + ln(x - 20, F - 1, x + 20, F - 1, R)
      + ln(x, m.axis, x, F + 19, R, '12 2 3 2') + bubble(x, m.axis);
  } else {
    s += `<rect x="${x - w}" y="${T}" width="${2 * w}" height="${F - T - 10}" fill="url(#sparse)"/>`
      + ln(x - w, T + 10, x - w, F - 25, G) + ln(x + w, T + 10, x + w, F - 25, G)
      + `<rect x="${x - m.bar}" y="${T - 2.5}" width="${2 * m.bar}" height="24" fill="#fff"/>`
      + (m.bar > 5 ? [-5, -2, 1, 4].map(d => ln(x + d, T, x + d, T + 20, '#777')).join('') : ln(x - 3, T - 1, x + 3, T - 1, R))
      + dimH([x - q, x - w], F - 27, F - 10) + dimH([x + w, x + q], F - 27, F - 10)
      + blob(x - w - 9, F - 30) + blob(x + w + 8, F - 30)
      + note(x - e + 1, T + 22, e - w - 3) + note(x + w + 1, T + 22, e - w - 3)
      + dimV([F - 8, F], x + q + 9, x + q + 3) + blob(x + q + 7, F - 4)
      + dimH([x - q, x + q], F + 18, F + 14) + dimH([x - h, x + h], F + 24, F + 14) + dimH([x - e, x + e], F + 30, F + 15)
      + blob(x, F + 15) + blob(x, F + 21) + blob(x, F + 27)
      + ln(x + 22, F + 9, x + e + 28, F + 9, R) + note(x + e + 1, F + 11, 26) + note(x + h + 22, F - 2, 17);
  }
  return s;
}

const models = [
  { x1: 199.5, x2: 348.5, y1: 463.5, y2: 462.5, h: 31, r: 10, T: 558.5, F: 625.5, w: 11, bar: 10, axis: 524.5, sec: [282, 433, 10.5, 452], label: '١٦Ø٢٢', cap: 'نموذج ١٨٫٠٠متــر', cx: 277, cy: 685 },
  { x1: 582.5, x2: 730.5, y1: 458.5, y2: 458.5, h: 30, r: 9, T: 553.5, F: 615.5, w: 10, bar: 8, axis: 519.5, sec: [664.5, 430, 8.5, 445], label: '١٦Ø١٥', cap: 'نموذج ١٥٫٠٠متــر', cx: 653, cy: 685 },
  { x1: 941.5, x2: 1087.5, y1: 457.5, y2: 457.5, h: 28, r: 8, T: 552.5, F: 610.5, w: 8, bar: 4, axis: 517.5, sec: [1028.5, 430, 8.5, 445], label: '١٢Ø١٨', cap: 'نموذج ١٫٠٠ متــر', cx: 1032, cy: 682 }
];
const defs = `<defs>
<pattern id="sparse" width="11" height="8" patternUnits="userSpaceOnUse"><rect width="11" height="8" fill="${Y}"/><path d="M1 1h1v1H1zM6 0h1v1H6zM3 3h1v1H3zM8 4h1v1H8zM0 6h1v1H0zM10 2h1v1h-1zM5 6h1v1H5z"/></pattern>
<pattern id="dense" width="4" height="4" patternUnits="userSpaceOnUse"><rect width="4" height="4" fill="${Y}"/><path d="M0 0h1v1H0zM2 1h1v1H2zM1 2h1v1H1zM3 3h1v1H3z"/></pattern></defs>`;
let art = box(108.5, 369.5, 1176.5, 702.5, '#fff') + ln(108, 661.5, 1177, 661.5, '#fff') + ln(469.5, 369, 469.5, 703, '#fff') + ln(824.5, 369, 824.5, 703, '#fff');
models.forEach(m => {
  art += pedestalPlan(m.x1, m.y1, m.h, m.r) + rebarPlan(m.x2, m.y2, m.h, m.r) + elevation(m.x1, m, false) + elevation(m.x2, m, true)
    + section(m.sec[0], m.sec[1], m.sec[2]) + `<text class="bars" x="${m.sec[0]}" y="${m.sec[3]}">${m.label}</text>`
    + `<text class="caption" x="${m.cx}" y="${m.cy}">${m.cap}</text>`;
});
art += ln(837, 573.5, 866, 573.5, '#fff') + ln(873, 573.5, 901, 573.5, '#fff') + ln(869.5, 542, 869.5, 570, '#fff') + ln(869.5, 577, 869.5, 606, '#fff')
  + box(866.5, 570.5, 872.5, 576.5, '#fff') + `<circle cx="869.5" cy="573.5" r="2" fill="none" stroke="#fff"/>`
  + box(69.5, 849.5, 84.5, 864.5, '#fff') + ln(76.5, 849, 76.5, 783, '#fff') + ln(85, 857.5, 151, 857.5, '#fff')
  + '<path d="M76.500 764L69.500 782.500h14zM151.500 850.500v14L170 857.500z" fill="none" stroke="#fff"/><path d="M76.500 766l-3 16M76.500 766l3 16M152 854l18 3.500-18 3" fill="none" stroke="#888"/>'
  + '<text class="ucs" x="78" y="751">Y</text><text class="ucs" x="192" y="867">X</text>';
document.getElementById('drawing').innerHTML = defs + `<g fill="none" shape-rendering="crispEdges">${art}</g>`;
```
